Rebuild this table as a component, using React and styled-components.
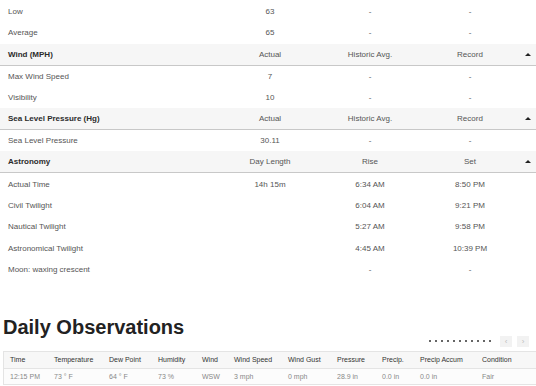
import React from 'react';
import styled, { createGlobalStyle } from 'styled-components';

const GlobalStyle = createGlobalStyle`
  html, body {
    margin: 0;
    padding: 0;
    background: #ffffff;
    font-family: "Liberation Sans", Arial, sans-serif;
  }
`;

const Page = styled.div`
  width: 536px;
  height: 386px;
  overflow: hidden;
  padding-top: 1px;
  box-sizing: border-box;
`;

const SummaryGrid = styled.div`
  display: grid;
  grid-template-columns: 220px 100px 100px 100px 16px;
`;

const Row = styled.div`
  display: contents;
`;

const Cell = styled.div`
  height: ${(p) => (p.$head ? '21px' : '21.3px')};
  display: flex;
  align-items: center;
  justify-content: ${(p) => (p.$label ? 'flex-start' : 'center')};
  padding-left: ${(p) => (p.$label ? '8px' : '0')};
  font-size: 8px;
  color: ${(p) => (p.$strong ? '#2b2b2b' : '#555')};
  font-weight: ${(p) => (p.$strong ? 700 : 400)};
  background: ${(p) => (p.$head ? '#f6f6f6' : '#fff')};
  border-bottom: ${(p) => (p.$head ? '1px solid #c8c8c8' : 'none')};
  white-space: nowrap;
`;

const Caret = styled.span`
  width: 0;
  height: 0;
  border-left: 3px solid transparent;
  border-right: 3px solid transparent;
  border-bottom: 3px solid #222;
`;

const HeadingRow = styled.div`
  display: flex;
  justify-content: space-between;
  align-items: flex-end;
  margin-top: 35px;
  padding: 0 7px 0 3px;
`;

const Title = styled.h2`
  margin: 0 0 8px;
  font-size: 20px;
  line-height: 24px;
  font-weight: 700;
  color: #222;
  font-family: "Liberation Sans", Arial, sans-serif;
`;

const Controls = styled.div`
  display: flex;
  align-items: center;
  gap: 5px;
`;

const Dots = styled.div`
  display: flex;
  gap: 4px;
  margin-right: 4px;
`;

const Dot = styled.span`
  width: 2px;
  height: 2px;
  border-radius: 50%;
  background: #333;
`;

const NavButton = styled.span`
  width: 12px;
  height: 11px;
  background: #f2f2f2;
  color: #bdbdbd;
  font-size: 8px;
  line-height: 11px;
  text-align: center;
`;

const ObsTable = styled.div`
  margin: 4px 0 0 3px;
  border: 1px solid #e4e4e4;
  border-right: none;
  display: grid;
  grid-template-columns: 44px 55px 49px 44px 32px 54px 49px 45px 38px 62px 1fr;
`;

const ObsCell = styled.div`
  height: ${(p) => (p.$head ? '16px' : '15px')};
  display: flex;
  align-items: center;
  padding-left: 6px;
  font-size: 7px;
  white-space: nowrap;
  color: ${(p) => (p.$head ? '#333' : '#888')};
  background: ${(p) => (p.$head ? '#f7f7f7' : '#fcfcfc')};
  border-bottom: ${(p) => (p.$head ? '1px solid #e4e4e4' : 'none')};
`;

const sections = [
  { rows: [['Low', '63', '-', '-'], ['Average', '65', '-', '-']] },
  {
    head: ['Wind (MPH)', 'Actual', 'Historic Avg.', 'Record'],
    rows: [['Max Wind Speed', '7', '-', '-'], ['Visibility', '10', '-', '-']],
  },
  {
    head: ['Sea Level Pressure (Hg)', 'Actual', 'Historic Avg.', 'Record'],
    rows: [['Sea Level Pressure', '30.11', '-', '-']],
  },
  {
    head: ['Astronomy', 'Day Length', 'Rise', 'Set'],
    rows: [
      ['Actual Time', '14h 15m', '6:34 AM', '8:50 PM'],
      ['Civil Twilight', '', '6:04 AM', '9:21 PM'],
      ['Nautical Twilight', '', '5:27 AM', '9:58 PM'],
      ['Astronomical Twilight', '', '4:45 AM', '10:39 PM'],
      ['Moon: waxing crescent', '', '-', '-'],
    ],
  },
];

const obsHead = ['Time', 'Temperature', 'Dew Point', 'Humidity', 'Wind', 'Wind Speed', 'Wind Gust', 'Pressure', 'Precip.', 'Precip Accum', 'Condition'];
const obsRow = ['12:15 PM', '73 ° F', '64 ° F', '73 %', 'WSW', '3 mph', '0 mph', '28.9 in', '0.0 in', '0.0 in', 'Fair'];

function App() {
  return (
    <Page>
      <GlobalStyle />
      <SummaryGrid>
        {sections.map((s, i) => (
          <React.Fragment key={i}>
            {s.head && (
              <Row>
                <Cell $head $label $strong>{s.head[0]}</Cell>
                <Cell $head>{s.head[1]}</Cell>
                <Cell $head>{s.head[2]}</Cell>
                <Cell $head>{s.head[3]}</Cell>
                <Cell $head><Caret /></Cell>
              </Row>
            )}
            {s.rows.map((r, j) => (
              <Row key={j}>
                <Cell $label>{r[0]}</Cell>
                <Cell>{r[1]}</Cell>
                <Cell>{r[2]}</Cell>
                <Cell>{r[3]}</Cell>
                <Cell />
              </Row>
            ))}
          </React.Fragment>
        ))}
      </SummaryGrid>

      <HeadingRow>
        <Title>Daily Observations</Title>
        <Controls>
          <Dots>
            {Array.from({ length: 11 }).map((_, i) => <Dot key={i} />)}
          </Dots>
          <NavButton>‹</NavButton>
          <NavButton>›</NavButton>
        </Controls>
      </HeadingRow>

      <ObsTable>
        {obsHead.map((h) => <ObsCell key={h} $head>{h}</ObsCell>)}
        {obsRow.map((v, i) => <ObsCell key={i}>{v}</ObsCell>)}
      </ObsTable>
    </Page>
  );
}

export default App;
